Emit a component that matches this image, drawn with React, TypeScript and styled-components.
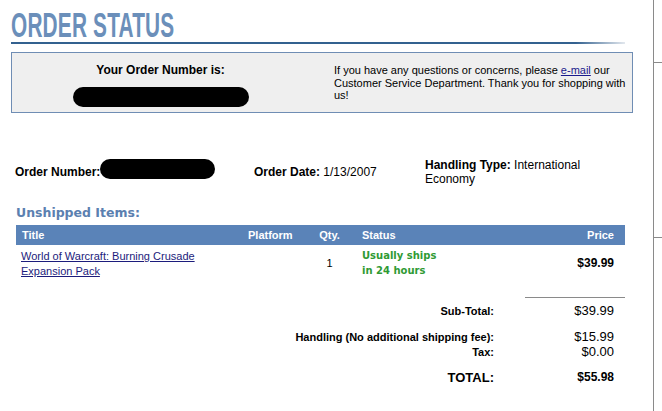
import React from "react";
import styled, { createGlobalStyle } from "styled-components";

const Global = createGlobalStyle`
  html, body { margin: 0; padding: 0; background: #ffffff; }
  body { font-family: "Liberation Sans", Arial, sans-serif; color: #000; }
`;

const Page = styled.div`
  display: flex;
  width: 662px;
  min-height: 411px;
  overflow: hidden;
`;

const Main = styled.main`
  width: 653px;
  flex: none;
  padding-left: 11px;
  box-sizing: border-box;
`;

const Side = styled.aside`
  flex: 1;
  border-left: 1px solid #8a8a8a;
  display: flex;
  flex-direction: column;
`;

const Tick = styled.div<{ $top: number }>`
  height: 1px;
  background: #8a8a8a;
  margin-top: ${(p) => p.$top}px;
`;

const TitleWrap = styled.div`
  padding-top: 7px;
  height: 35px;
  line-height: 35px;
  white-space: nowrap;
`;

const Title = styled.h1`
  display: inline-block;
  margin: 0;
  font-size: 35px;
  line-height: 35px;
  font-weight: bold;
  color: #6b8fba;
  transform: scaleX(0.595);
  transform-origin: left center;
  letter-spacing: 0.3px;
`;

const Rule = styled.div`
  width: 614px;
  height: 2px;
  background: linear-gradient(90deg, #33618f 0%, #33618f 92%, #e3e8ee 100%);
`;

const InfoBox = styled.section`
  margin-top: 8px;
  width: 622px;
  height: 61px;
  box-sizing: border-box;
  border: 1px solid #6f8db4;
  background: #efefef;
  display: flex;
  align-items: flex-start;
`;

const InfoLeft = styled.div`
  width: 297px;
  padding-top: 10px;
  display: flex;
  flex-direction: column;
  align-items: center;
`;

const InfoLabel = styled.div`
  font-size: 12px;
  line-height: 14px;
  font-weight: bold;
`;

const Pill = styled.div<{ $w: number }>`
  width: ${(p) => p.$w}px;
  height: 20px;
  border-radius: 10px;
  background: #000;
  flex: none;
`;

const PillBelow = styled(Pill)`
  margin-top: 10px;
`;

const InfoRight = styled.p`
  margin: 0 0 0 25px;
  padding-top: 11px;
  font-size: 11px;
  line-height: 12.5px;
  white-space: nowrap;
`;

const Link = styled.a`
  color: #1a1a8c;
  text-decoration: underline;
`;

const OrderRow = styled.div`
  margin-top: 45px;
  padding-left: 4px;
  display: flex;
  align-items: center;
  font-size: 12px;
  line-height: 14px;
`;

const OrderCell = styled.div<{ $w: number }>`
  width: ${(p) => p.$w}px;
  flex: none;
`;

const OrderNumCell = styled.div`
  width: 239px;
  flex: none;
  display: flex;
  align-items: flex-end;
  margin-bottom: 6px;
`;

const B = styled.b`
  font-weight: bold;
`;

const Content = styled.div`
  margin-left: 5px;
  width: 609px;
`;

const SectionHead = styled.h2`
  margin: 19px 0 0 0;
  font-family: "DejaVu Sans", Verdana, sans-serif;
  font-size: 12.5px;
  line-height: 15px;
  font-weight: bold;
  color: #5b80b0;
`;

const Grid = styled.div`
  display: grid;
  grid-template-columns: 226px 71px 33px 1fr 110px;
  align-items: center;
`;

const HeadRow = styled(Grid)`
  margin-top: 5px;
  height: 20px;
  background: #5a83b8;
  color: #fff;
  font-size: 11px;
  font-weight: bold;
`;

const Cell = styled.div<{ $align?: "left" | "center" | "right"; $pl?: number; $pr?: number }>`
  text-align: ${(p) => p.$align || "left"};
  padding-left: ${(p) => p.$pl ?? 0}px;
  padding-right: ${(p) => p.$pr ?? 0}px;
`;

const ItemRow = styled(Grid)`
  padding: 4px 0;
  font-size: 11px;
  line-height: 14.5px;
`;

const ItemLink = styled(Link)`
  color: #1c1c7c;
`;

const StatusText = styled.div`
  font-family: "DejaVu Sans", Verdana, sans-serif;
  font-size: 10px;
  line-height: 14.5px;
  font-weight: bold;
  color: #2f9a34;
  padding-left: 16px;
`;

const Price = styled.div`
  text-align: right;
  padding-right: 11px;
  font-size: 12px;
  font-weight: bold;
`;

const Totals = styled.div`
  display: grid;
  grid-template-columns: 1fr 100px;
  column-gap: 31px;
`;

const Separator = styled.div`
  grid-column: 2;
  margin-top: 15px;
  border-top: 1px solid #8a8a8a;
`;

const TotalLabel = styled.div<{ $mt?: number; $big?: boolean }>`
  grid-column: 1;
  text-align: right;
  margin-top: ${(p) => p.$mt ?? 0}px;
  font-weight: bold;
  font-size: ${(p) => (p.$big ? 13 : 11)}px;
  line-height: ${(p) => (p.$big ? 15 : 14.5)}px;
  height: ${(p) => (p.$big ? 15 : 14.5)}px;
  display: flex;
  align-items: flex-end;
  justify-content: flex-end;
`;

const TotalValue = styled.div<{ $mt?: number; $bold?: boolean }>`
  grid-column: 2;
  text-align: right;
  padding-right: 11px;
  margin-top: ${(p) => p.$mt ?? 0}px;
  font-size: ${(p) => (p.$bold ? 12 : 13)}px;
  font-weight: ${(p) => (p.$bold ? "bold" : "normal")};
  line-height: ${(p) => (p.$bold ? 15 : 14.5)}px;
  height: ${(p) => (p.$bold ? 15 : 14.5)}px;
`;

const totals = [
  { label: "Sub-Total:", value: "$39.99", mt: 6 },
  { label: "Handling (No additional shipping fee):", value: "$15.99", mt: 11.5 },
  { label: "Tax:", value: "$0.00", mt: 0 },
];

export default function App() {
  return (
    <>
      <Global />
      <Page>
        <Main>
          <TitleWrap>
            <Title>ORDER STATUS</Title>
          </TitleWrap>
          <Rule />
          <InfoBox>
            <InfoLeft>
              <InfoLabel>Your Order Number is:</InfoLabel>
              <PillBelow $w={176} />
            </InfoLeft>
            <InfoRight>
              If you have any questions or concerns, please <Link href="#">e-mail</Link> our
              <br />
              Customer Service Department. Thank you for shopping with
              <br />
              us!
            </InfoRight>
          </InfoBox>
          <OrderRow>
            <OrderNumCell>
              <B>Order Number:</B>
              <Pill $w={115} />
            </OrderNumCell>
            <OrderCell $w={171}>
              <B>Order Date:</B> 1/13/2007
            </OrderCell>
            <OrderCell $w={170}>
              <B>Handling Type:</B> International
              <br />
              Economy
            </OrderCell>
          </OrderRow>
          <Content>
            <SectionHead>Unshipped Items:</SectionHead>
            <HeadRow>
              <Cell $pl={6}>Title</Cell>
              <Cell $pl={6}>Platform</Cell>
              <Cell $align="center">Qty.</Cell>
              <Cell $pl={16}>Status</Cell>
              <Cell $align="right" $pr={11}>Price</Cell>
            </HeadRow>
            <ItemRow>
              <Cell $pl={5}>
                <ItemLink href="#">World of Warcraft: Burning Crusade</ItemLink>
                <br />
                <ItemLink href="#">Expansion Pack</ItemLink>
              </Cell>
              <Cell />
              <Cell $align="center">1</Cell>
              <StatusText>
                Usually ships
                <br />
                in 24 hours
              </StatusText>
              <Price>$39.99</Price>
            </ItemRow>
            <Totals>
              <Separator />
              {totals.map((t) => (
                <React.Fragment key={t.label}>
                  <TotalLabel $mt={t.mt}>{t.label}</TotalLabel>
                  <TotalValue $mt={t.mt}>{t.value}</TotalValue>
                </React.Fragment>
              ))}
              <TotalLabel $mt={10.5} $big>TOTAL:</TotalLabel>
              <TotalValue $mt={10.5} $bold>$55.98</TotalValue>
            </Totals>
          </Content>
        </Main>
        <Side>
          <Tick $top={62} />
          <Tick $top={174} />
        </Side>
      </Page>
    </>
  );
}
